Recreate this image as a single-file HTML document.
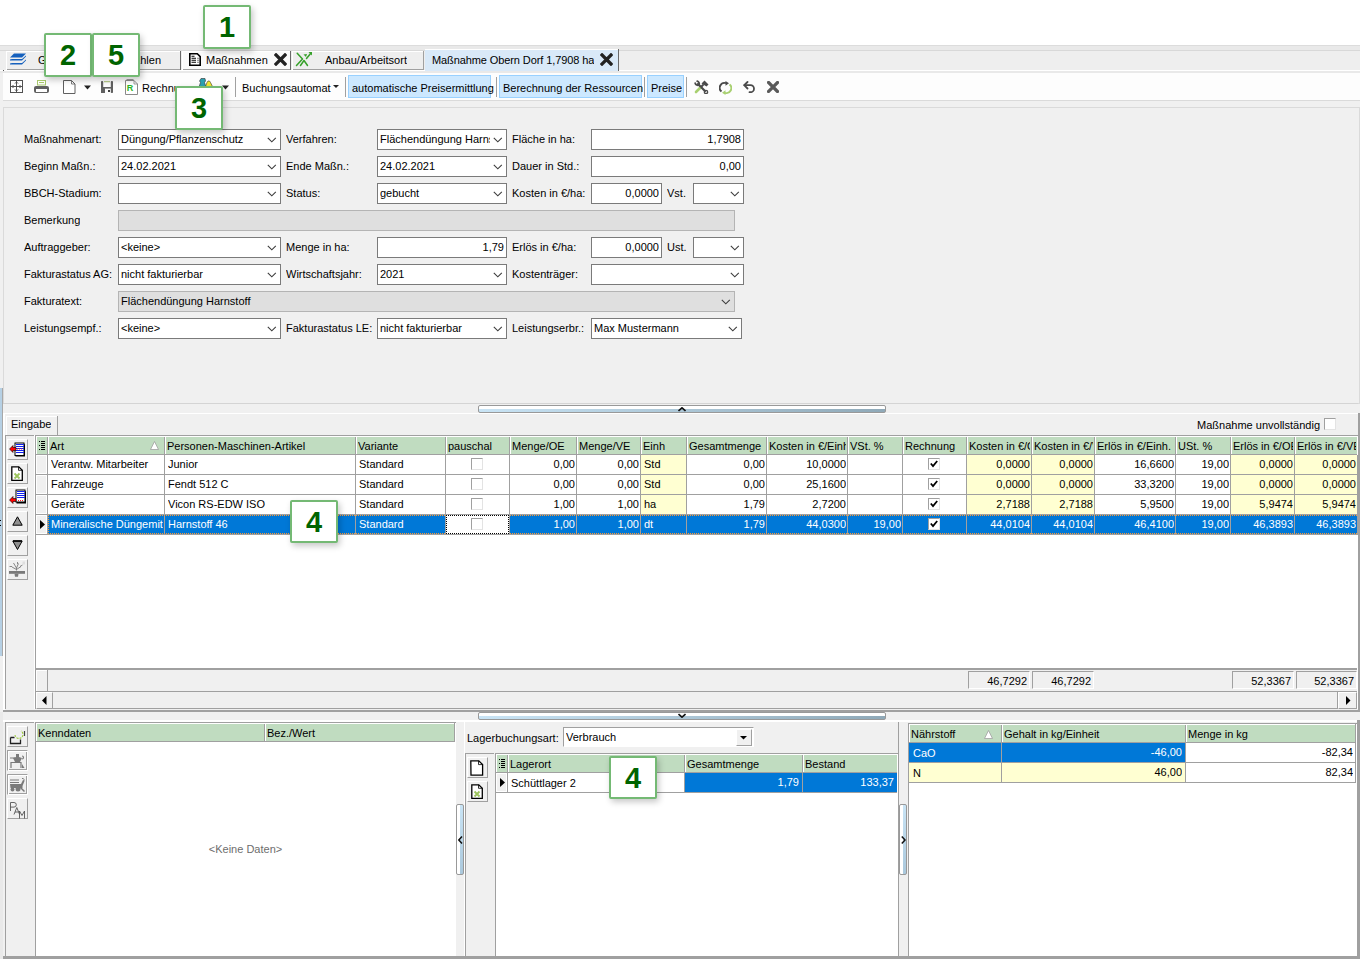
<!DOCTYPE html><html><head><meta charset="utf-8"><style>
*{margin:0;padding:0;box-sizing:border-box}
html,body{width:1360px;height:959px;overflow:hidden;background:#fff}
body{position:relative;font-family:"Liberation Sans",sans-serif;font-size:11px;color:#000}
div{position:absolute}
.t{white-space:nowrap;line-height:13px;height:13px;overflow:hidden}
</style></head><body><div style="left:0px;top:45px;width:1360px;height:914px;background:#f0f0f0"></div>
<div style="left:0px;top:45px;width:1360px;height:1px;background:#dcdcdc"></div>
<div style="left:0px;top:46px;width:1360px;height:5px;background:#e9e9e9"></div>
<div style="left:0px;top:51px;width:1360px;height:19px;background:#eeeeee"></div>
<div style="left:0px;top:50px;width:1360px;height:1px;background:#d9d9d9"></div>
<div style="left:0px;top:70px;width:1360px;height:1px;background:#ffffff"></div>
<div style="left:0px;top:71px;width:1360px;height:2px;background:#e9e9e9"></div>
<div style="left:3px;top:73px;width:1357px;height:27px;background:#fdfdfd"></div>
<div style="left:3px;top:70px;width:1px;height:1px;background:#555"></div>
<div style="left:3px;top:100px;width:1357px;height:1px;background:#dadada"></div>
<div style="left:6px;top:51px;width:175px;height:19px;background:#eeeeee;border-top:1px solid #fff;border-left:1px solid #fff"></div>
<div style="left:7px;top:69px;width:174px;height:1px;background:#a0a0a0"></div>
<div style="left:180px;top:51px;width:1px;height:19px;background:#6a6a6a"></div>
<div class="t" style="left:38px;top:54px;">G</div>
<div class="t" style="left:-139px;top:54px;width:300px;text-align:right;">ahlen</div>
<svg style="position:absolute;left:10px;top:53px;" width="16" height="14" viewBox="0 0 16 14"><path d="M4 0.5h12l-4 4h-12z" fill="#1560bd"/><path d="M0 6.5l2-0.5h10l4-3.5v1l-4 4h-12z" fill="#1560bd"/><path d="M0 10.5l2-0.5h10l4-3.5v1l-4 4h-12z" fill="#1560bd"/></svg>
<div style="left:182px;top:51px;width:109px;height:19px;background:#fafafa;border-top:1px solid #fff;border-left:1px solid #fff"></div>
<div style="left:183px;top:69px;width:108px;height:1px;background:#a0a0a0"></div>
<div style="left:290px;top:51px;width:1px;height:19px;background:#6a6a6a"></div>
<div class="t" style="left:206px;top:54px;">Maßnahmen</div>
<svg style="position:absolute;left:189px;top:53px;" width="12" height="13" viewBox="0 0 12 13"><path d="M0.8 0.8h7.5l2.9 2.9v8.5h-10.4z" fill="#fff" stroke="#000" stroke-width="1.6"/><path d="M2.5 3.3h3M2.5 5.3h4.5M2.5 7.3h4.5M2.5 9.3h4.5" stroke="#000" stroke-width="1.1"/><path d="M8.5 5.3h1M8.5 7.3h1M8.5 9.3h1" stroke="#000" stroke-width="1.1"/></svg>
<svg style="position:absolute;left:274px;top:53px;" width="13" height="13" viewBox="0 0 13 13"><path d="M2 2l9 9M11 2l-9 9" stroke="#222" stroke-width="3.3" stroke-linecap="square"/></svg>
<div style="left:292px;top:51px;width:132px;height:19px;background:#eeeeee;border-top:1px solid #fff;border-left:1px solid #fff"></div>
<div style="left:293px;top:69px;width:131px;height:1px;background:#a0a0a0"></div>
<div style="left:423px;top:51px;width:1px;height:19px;background:#a0a0a0"></div>
<div class="t" style="left:325px;top:54px;">Anbau/Arbeitsort</div>
<svg style="position:absolute;left:290px;top:48px;" width="24" height="22" viewBox="0 0 24 22"><g fill="none" stroke="#36a02a" stroke-width="1.5" stroke-linecap="round" stroke-linejoin="round"><path d="M7.2 5.2L12.5 11L6.5 17.5"/><path d="M10.5 17.5L14 12.5L17.5 17.5"/><path d="M16.5 10.5L20.8 5.2"/></g><path d="M18.5 4H22V7.5z" fill="#36a02a"/><path d="M13.5 6.5L17 6L16 9z" fill="#36a02a"/></svg>
<div style="left:425px;top:49px;width:194px;height:22px;background:#d9e9f8;border-top:1px solid #fff"></div>
<div style="left:618px;top:49px;width:1px;height:22px;background:#6a6a6a"></div>
<div class="t" style="left:432px;top:54px;letter-spacing:-0.1px">Maßnahme Obern Dorf 1,7908 ha</div>
<svg style="position:absolute;left:600px;top:53px;" width="13" height="13" viewBox="0 0 13 13"><path d="M2 2l9 9M11 2l-9 9" stroke="#222" stroke-width="3.3" stroke-linecap="square"/></svg>
<div style="left:619px;top:50px;width:741px;height:1px;background:#d8d8d8"></div>
<div style="left:3px;top:107px;width:1357px;height:297px;background:#f0f0f0;border:1px solid #dadada"></div>
<div class="t" style="left:24px;top:133px;">Maßnahmenart:</div>
<div class="t" style="left:24px;top:160px;">Beginn Maßn.:</div>
<div class="t" style="left:24px;top:187px;">BBCH-Stadium:</div>
<div class="t" style="left:24px;top:214px;">Bemerkung</div>
<div class="t" style="left:24px;top:241px;">Auftraggeber:</div>
<div class="t" style="left:24px;top:268px;">Fakturastatus AG:</div>
<div class="t" style="left:24px;top:295px;">Fakturatext:</div>
<div class="t" style="left:24px;top:322px;">Leistungsempf.:</div>
<div class="t" style="left:286px;top:133px;">Verfahren:</div>
<div class="t" style="left:286px;top:160px;">Ende Maßn.:</div>
<div class="t" style="left:286px;top:187px;">Status:</div>
<div class="t" style="left:286px;top:241px;">Menge in ha:</div>
<div class="t" style="left:286px;top:268px;">Wirtschaftsjahr:</div>
<div class="t" style="left:286px;top:322px;">Fakturastatus LE:</div>
<div class="t" style="left:512px;top:133px;">Fläche in ha:</div>
<div class="t" style="left:512px;top:160px;">Dauer in Std.:</div>
<div class="t" style="left:512px;top:187px;">Kosten in €/ha:</div>
<div class="t" style="left:512px;top:241px;">Erlös in €/ha:</div>
<div class="t" style="left:512px;top:268px;">Kostenträger:</div>
<div class="t" style="left:512px;top:322px;">Leistungserbr.:</div>
<div style="left:118px;top:129px;width:163px;height:21px;background:#fff;border:1px solid #7a7a7a"></div>
<div class="t" style="left:121px;top:133px;width:143px">Düngung/Pflanzenschutz</div>
<svg style="position:absolute;left:267px;top:137px;" width="10" height="6" viewBox="0 0 10 6"><polyline points="0.8,0.8 4.8,4.8 8.8,0.8" fill="none" stroke="#3c3c3c" stroke-width="1.1"/></svg>
<div style="left:118px;top:156px;width:163px;height:21px;background:#fff;border:1px solid #7a7a7a"></div>
<div class="t" style="left:121px;top:160px;width:143px">24.02.2021</div>
<svg style="position:absolute;left:267px;top:164px;" width="10" height="6" viewBox="0 0 10 6"><polyline points="0.8,0.8 4.8,4.8 8.8,0.8" fill="none" stroke="#3c3c3c" stroke-width="1.1"/></svg>
<div style="left:118px;top:183px;width:163px;height:21px;background:#fff;border:1px solid #7a7a7a"></div>
<svg style="position:absolute;left:267px;top:191px;" width="10" height="6" viewBox="0 0 10 6"><polyline points="0.8,0.8 4.8,4.8 8.8,0.8" fill="none" stroke="#3c3c3c" stroke-width="1.1"/></svg>
<div style="left:118px;top:210px;width:617px;height:21px;background:#dfdfdf;border:1px solid #b4b4b4"></div>
<div style="left:118px;top:237px;width:163px;height:21px;background:#fff;border:1px solid #7a7a7a"></div>
<div class="t" style="left:121px;top:241px;width:143px">&lt;keine&gt;</div>
<svg style="position:absolute;left:267px;top:245px;" width="10" height="6" viewBox="0 0 10 6"><polyline points="0.8,0.8 4.8,4.8 8.8,0.8" fill="none" stroke="#3c3c3c" stroke-width="1.1"/></svg>
<div style="left:118px;top:264px;width:163px;height:21px;background:#fff;border:1px solid #7a7a7a"></div>
<div class="t" style="left:121px;top:268px;width:143px">nicht fakturierbar</div>
<svg style="position:absolute;left:267px;top:272px;" width="10" height="6" viewBox="0 0 10 6"><polyline points="0.8,0.8 4.8,4.8 8.8,0.8" fill="none" stroke="#3c3c3c" stroke-width="1.1"/></svg>
<div style="left:118px;top:291px;width:617px;height:21px;background:#dfdfdf;border:1px solid #b4b4b4"></div>
<div class="t" style="left:121px;top:295px;width:597px">Flächendüngung Harnstoff</div>
<svg style="position:absolute;left:721px;top:299px;" width="10" height="6" viewBox="0 0 10 6"><polyline points="0.8,0.8 4.8,4.8 8.8,0.8" fill="none" stroke="#3c3c3c" stroke-width="1.1"/></svg>
<div style="left:118px;top:318px;width:163px;height:21px;background:#fff;border:1px solid #7a7a7a"></div>
<div class="t" style="left:121px;top:322px;width:143px">&lt;keine&gt;</div>
<svg style="position:absolute;left:267px;top:326px;" width="10" height="6" viewBox="0 0 10 6"><polyline points="0.8,0.8 4.8,4.8 8.8,0.8" fill="none" stroke="#3c3c3c" stroke-width="1.1"/></svg>
<div style="left:377px;top:129px;width:130px;height:21px;background:#fff;border:1px solid #7a7a7a"></div>
<div class="t" style="left:380px;top:133px;width:110px">Flächendüngung Harns</div>
<svg style="position:absolute;left:493px;top:137px;" width="10" height="6" viewBox="0 0 10 6"><polyline points="0.8,0.8 4.8,4.8 8.8,0.8" fill="none" stroke="#3c3c3c" stroke-width="1.1"/></svg>
<div style="left:377px;top:156px;width:130px;height:21px;background:#fff;border:1px solid #7a7a7a"></div>
<div class="t" style="left:380px;top:160px;width:110px">24.02.2021</div>
<svg style="position:absolute;left:493px;top:164px;" width="10" height="6" viewBox="0 0 10 6"><polyline points="0.8,0.8 4.8,4.8 8.8,0.8" fill="none" stroke="#3c3c3c" stroke-width="1.1"/></svg>
<div style="left:377px;top:183px;width:130px;height:21px;background:#fff;border:1px solid #7a7a7a"></div>
<div class="t" style="left:380px;top:187px;width:110px">gebucht</div>
<svg style="position:absolute;left:493px;top:191px;" width="10" height="6" viewBox="0 0 10 6"><polyline points="0.8,0.8 4.8,4.8 8.8,0.8" fill="none" stroke="#3c3c3c" stroke-width="1.1"/></svg>
<div style="left:377px;top:237px;width:130px;height:21px;background:#fff;border:1px solid #7a7a7a"></div>
<div class="t" style="left:204px;top:241px;width:300px;text-align:right;">1,79</div>
<div style="left:377px;top:264px;width:130px;height:21px;background:#fff;border:1px solid #7a7a7a"></div>
<div class="t" style="left:380px;top:268px;width:110px">2021</div>
<svg style="position:absolute;left:493px;top:272px;" width="10" height="6" viewBox="0 0 10 6"><polyline points="0.8,0.8 4.8,4.8 8.8,0.8" fill="none" stroke="#3c3c3c" stroke-width="1.1"/></svg>
<div style="left:377px;top:318px;width:130px;height:21px;background:#fff;border:1px solid #7a7a7a"></div>
<div class="t" style="left:380px;top:322px;width:110px">nicht fakturierbar</div>
<svg style="position:absolute;left:493px;top:326px;" width="10" height="6" viewBox="0 0 10 6"><polyline points="0.8,0.8 4.8,4.8 8.8,0.8" fill="none" stroke="#3c3c3c" stroke-width="1.1"/></svg>
<div style="left:591px;top:129px;width:153px;height:21px;background:#fff;border:1px solid #7a7a7a"></div>
<div class="t" style="left:441px;top:133px;width:300px;text-align:right;">1,7908</div>
<div style="left:591px;top:156px;width:153px;height:21px;background:#fff;border:1px solid #7a7a7a"></div>
<div class="t" style="left:441px;top:160px;width:300px;text-align:right;">0,00</div>
<div style="left:591px;top:183px;width:71px;height:21px;background:#fff;border:1px solid #7a7a7a"></div>
<div class="t" style="left:359px;top:187px;width:300px;text-align:right;">0,0000</div>
<div class="t" style="left:667px;top:187px;">Vst.</div>
<div style="left:693px;top:183px;width:51px;height:21px;background:#fff;border:1px solid #7a7a7a"></div>
<svg style="position:absolute;left:730px;top:191px;" width="10" height="6" viewBox="0 0 10 6"><polyline points="0.8,0.8 4.8,4.8 8.8,0.8" fill="none" stroke="#3c3c3c" stroke-width="1.1"/></svg>
<div style="left:591px;top:237px;width:71px;height:21px;background:#fff;border:1px solid #7a7a7a"></div>
<div class="t" style="left:359px;top:241px;width:300px;text-align:right;">0,0000</div>
<div class="t" style="left:667px;top:241px;">Ust.</div>
<div style="left:693px;top:237px;width:51px;height:21px;background:#fff;border:1px solid #7a7a7a"></div>
<svg style="position:absolute;left:730px;top:245px;" width="10" height="6" viewBox="0 0 10 6"><polyline points="0.8,0.8 4.8,4.8 8.8,0.8" fill="none" stroke="#3c3c3c" stroke-width="1.1"/></svg>
<div style="left:591px;top:264px;width:153px;height:21px;background:#fff;border:1px solid #7a7a7a"></div>
<svg style="position:absolute;left:730px;top:272px;" width="10" height="6" viewBox="0 0 10 6"><polyline points="0.8,0.8 4.8,4.8 8.8,0.8" fill="none" stroke="#3c3c3c" stroke-width="1.1"/></svg>
<div style="left:591px;top:318px;width:151px;height:21px;background:#fff;border:1px solid #7a7a7a"></div>
<div class="t" style="left:594px;top:322px;width:131px">Max Mustermann</div>
<svg style="position:absolute;left:728px;top:326px;" width="10" height="6" viewBox="0 0 10 6"><polyline points="0.8,0.8 4.8,4.8 8.8,0.8" fill="none" stroke="#3c3c3c" stroke-width="1.1"/></svg>
<svg style="position:absolute;left:10px;top:80px;" width="13" height="13" viewBox="0 0 13 13"><rect x="0.5" y="0.5" width="12" height="12" fill="none" stroke="#505050"/><path d="M6.5 1v11M1 6.5h11" stroke="#505050" stroke-width="1"/><path d="M5 3.5L6.5 2 8 3.5M5 9.5L6.5 11 8 9.5M3.5 5L2 6.5 3.5 8M9.5 5L11 6.5 9.5 8" fill="none" stroke="#505050" stroke-width="1"/></svg>
<svg style="position:absolute;left:34px;top:80px;" width="15" height="14" viewBox="0 0 15 14"><rect x="3.5" y="0.5" width="8" height="4.5" fill="none" stroke="#a8c86a"/><path d="M5 2.5h5" stroke="#a8c86a"/><rect x="0" y="6" width="15" height="7" rx="2" fill="#606060"/><rect x="2" y="9" width="11" height="3" fill="#fdfdfd"/></svg>
<svg style="position:absolute;left:63px;top:80px;" width="13" height="14" viewBox="0 0 13 14"><path d="M0.5 0.5h8l3.5 3.5v9.5h-11.5z" fill="#fff" stroke="#606060"/><path d="M8.5 0.5v3.5h3.5" fill="none" stroke="#606060" stroke-width="0.8"/></svg>
<svg style="position:absolute;left:84px;top:85px;" width="8" height="5" viewBox="0 0 8 5"><path d="M0 0.5h7l-3.5 4z" fill="#222"/></svg>
<svg style="position:absolute;left:101px;top:81px;" width="12" height="12" viewBox="0 0 12 12"><rect x="0" y="0" width="2.2" height="12" rx="0.8" fill="#606060"/><rect x="9.8" y="0" width="2.2" height="12" rx="0.8" fill="#606060"/><rect x="0" y="6" width="12" height="1.6" fill="#606060"/><rect x="0" y="7" width="4" height="5" rx="0.6" fill="#606060"/><rect x="7" y="9" width="2" height="2" fill="#404040"/><path d="M3 0.7h6" stroke="#a8c070" stroke-width="1"/></svg>
<svg style="position:absolute;left:125px;top:79px;" width="13" height="16" viewBox="0 0 13 16"><path d="M0.5 1.5h8.5l3.5 3.5v10.5h-12z" fill="#fff" stroke="#8a8a8a"/><path d="M1.5 0.5h7" stroke="#9a9a9a"/><path d="M9 1.5v3.5h3.5" fill="none" stroke="#8a8a8a" stroke-width="0.8"/><text x="1.8" y="12.3" font-family="Liberation Sans" font-weight="bold" font-size="9" fill="#28b428">R</text></svg>
<div class="t" style="left:142px;top:82px;">Rechnung</div>
<svg style="position:absolute;left:199px;top:78px;" width="14" height="10" viewBox="0 0 14 10"><path d="M2 0.5h4l0.5 2.5-1 1.5 1.5 4.5h-7l1.5-4.5-1-1.5z" fill="#2aa0b0" stroke="#333" stroke-width="0.6"/><path d="M6.5 8.5l1.5-4 1-1.5h1.5l1 1.5 2 4z" fill="#f0e830" stroke="#333" stroke-width="0.6"/></svg>
<svg style="position:absolute;left:222px;top:85px;" width="8" height="5" viewBox="0 0 8 5"><path d="M0 0.5h7l-3.5 4z" fill="#222"/></svg>
<div style="left:235px;top:77px;width:1px;height:20px;background:#a0a0a0"></div>
<div class="t" style="left:242px;top:82px;">Buchungsautomat</div>
<svg style="position:absolute;left:333px;top:85px;" width="6" height="4" viewBox="0 0 6 4"><path d="M0 0h6l-3 3z" fill="#222"/></svg>
<div style="left:345px;top:77px;width:1px;height:20px;background:#a0a0a0"></div>
<div style="left:348px;top:75px;width:143px;height:23px;background:#cce8ff;border:1px solid #99d1ff"></div>
<div class="t" style="left:352px;top:82px;">automatische Preisermittlung</div>
<div style="left:496px;top:77px;width:1px;height:20px;background:#a0a0a0"></div>
<div style="left:499px;top:75px;width:143px;height:23px;background:#cce8ff;border:1px solid #99d1ff"></div>
<div class="t" style="left:503px;top:82px;">Berechnung der Ressourcen</div>
<div style="left:644px;top:77px;width:1px;height:20px;background:#a0a0a0"></div>
<div style="left:647px;top:75px;width:37px;height:23px;background:#cce8ff;border:1px solid #99d1ff"></div>
<div class="t" style="left:651px;top:82px;">Preise</div>
<div style="left:686px;top:77px;width:1px;height:20px;background:#a0a0a0"></div>
<svg style="position:absolute;left:694px;top:80px;" width="15" height="14" viewBox="0 0 15 14"><g stroke-linecap="round" fill="none"><path d="M4 4L11 11" stroke="#4a4a4a" stroke-width="2.2"/><path d="M1.2 3.2A2.8 2.8 0 0 0 5 5M3.2 1.2A2.8 2.8 0 0 1 5 5" stroke="#4a4a4a" stroke-width="1.8"/><circle cx="12" cy="12" r="1.6" stroke="#4a4a4a" stroke-width="1.4"/><path d="M9 5L5.5 8.5" stroke="#4a4a4a" stroke-width="2"/><path d="M5.5 8.5L2 12" stroke="#a8d070" stroke-width="2.6"/></g><path d="M7.5 3.5L10.5 0.5L14.5 4.5L12.5 6.5z" fill="#4a4a4a"/></svg>
<svg style="position:absolute;left:719px;top:81px;" width="13" height="14" viewBox="0 0 13 14"><path d="M7 2.2A4.8 4.8 0 0 0 2.5 10.5" fill="none" stroke="#4a4a4a" stroke-width="1.9"/><path d="M6.5 0L10 2.3L6.5 4.8z" fill="#4a4a4a"/><path d="M6 11.8A4.8 4.8 0 0 0 10.5 3.5" fill="none" stroke="#a8d070" stroke-width="1.9"/><path d="M6.5 9.2L3 11.7L6.5 14z" fill="#a8d070"/></svg>
<svg style="position:absolute;left:743px;top:81px;" width="13" height="12" viewBox="0 0 13 12"><g fill="none" stroke="#4a4a4a" stroke-width="1.8" stroke-linecap="round" stroke-linejoin="round"><path d="M4.5 1L1.2 4.2L4.5 7.5"/><path d="M1.5 4.2H7.5A3.5 3.5 0 0 1 7.5 11.2H6.5"/></g></svg>
<svg style="position:absolute;left:767px;top:81px;" width="12" height="12" viewBox="0 0 12 12"><path d="M1.5 1.5l9 9M10.5 1.5l-9 9" stroke="#5a5a5a" stroke-width="3.2" stroke-linecap="square"/></svg>
<div style="left:3px;top:403px;width:1355px;height:1px;background:#d4d4d4"></div>
<div style="left:478px;top:405px;width:408px;height:8px;border:1px solid #999;border-radius:2px;background:linear-gradient(to bottom,#fff 0,#fff 3px,transparent 3px),linear-gradient(to right,#c9e4f5,#8fa9b8)"></div>
<svg style="position:absolute;left:678px;top:407px;" width="8" height="5" viewBox="0 0 8 5"><polyline points="0.5,4 4,0.8 7.5,4" fill="none" stroke="#111" stroke-width="1.6"/></svg>
<div style="left:4px;top:413px;width:1354px;height:1px;background:#ffffff"></div>
<div style="left:0px;top:388px;width:2px;height:268px;background:#b6d0e4"></div>
<div style="left:2px;top:388px;width:1px;height:268px;background:#a8a8a8"></div>
<div style="left:3px;top:413px;width:2px;height:297px;background:#fff"></div>
<div style="left:0px;top:520px;width:1px;height:1px;background:#000"></div>
<div style="left:0px;top:525px;width:1px;height:1px;background:#000"></div>
<div style="left:6px;top:416px;width:51px;height:19px;background:#f0f0f0;border-top:1px solid #fff;border-left:1px solid #fff"></div>
<div style="left:57px;top:416px;width:1px;height:19px;background:#a0a0a0"></div>
<div class="t" style="left:11px;top:418px;">Eingabe</div>
<div class="t" style="left:1020px;top:419px;width:300px;text-align:right;">Maßnahme unvollständig</div>
<div style="left:1324px;top:418px;width:12px;height:12px;background:#fff;border-left:1px solid #a0a0a0;border-top:1px solid #a0a0a0;border-right:1px solid #e3e3e3;border-bottom:1px solid #e3e3e3"></div>
<div style="left:1358px;top:413px;width:2px;height:299px;background:#a0a0a0"></div>
<div style="left:5px;top:435px;width:29px;height:274px;background:#f0f0f0;border-left:1px solid #a0a0a0;border-top:1px solid #a0a0a0"></div>
<div style="left:34px;top:435px;width:1px;height:274px;background:#ffffff"></div>
<div style="left:7px;top:439px;width:21px;height:21px;background:#f0f0f0;border-top:1px solid #fff;border-left:1px solid #fff;border-right:1px solid #a0a0a0;border-bottom:1px solid #a0a0a0"></div>
<div style="left:7px;top:463px;width:21px;height:21px;background:#f0f0f0;border-top:1px solid #fff;border-left:1px solid #fff;border-right:1px solid #a0a0a0;border-bottom:1px solid #a0a0a0"></div>
<div style="left:7px;top:487px;width:21px;height:21px;background:#f0f0f0;border-top:1px solid #fff;border-left:1px solid #fff;border-right:1px solid #a0a0a0;border-bottom:1px solid #a0a0a0"></div>
<div style="left:7px;top:511px;width:21px;height:21px;background:#f0f0f0;border-top:1px solid #fff;border-left:1px solid #fff;border-right:1px solid #a0a0a0;border-bottom:1px solid #a0a0a0"></div>
<div style="left:7px;top:535px;width:21px;height:21px;background:#f0f0f0;border-top:1px solid #fff;border-left:1px solid #fff;border-right:1px solid #a0a0a0;border-bottom:1px solid #a0a0a0"></div>
<div style="left:7px;top:559px;width:21px;height:21px;background:#f0f0f0;border-top:1px solid #fff;border-left:1px solid #fff;border-right:1px solid #a0a0a0;border-bottom:1px solid #a0a0a0"></div>
<div style="left:35px;top:435px;width:1323px;height:274px;background:#fff;border-left:1px solid #a0a0a0;border-top:1px solid #a0a0a0"></div>
<div style="left:36px;top:437px;width:1321px;height:17px;background:#c0dcc0"></div>
<div style="left:36px;top:436px;width:1321px;height:1px;background:#ffffff"></div>
<div style="left:36px;top:436px;width:1px;height:18px;background:#ffffff"></div>
<div style="left:36px;top:454px;width:1321px;height:1px;background:#a0a0a0"></div>
<div style="left:47px;top:437px;width:1px;height:17px;background:#a0a0a0"></div>
<div style="left:48px;top:437px;width:1px;height:17px;background:#ffffff"></div>
<div class="t" style="left:50px;top:440px;width:113px">Art</div>
<div style="left:164px;top:437px;width:1px;height:17px;background:#a0a0a0"></div>
<div style="left:165px;top:437px;width:1px;height:17px;background:#ffffff"></div>
<div class="t" style="left:167px;top:440px;width:187px">Personen-Maschinen-Artikel</div>
<div style="left:355px;top:437px;width:1px;height:17px;background:#a0a0a0"></div>
<div style="left:356px;top:437px;width:1px;height:17px;background:#ffffff"></div>
<div class="t" style="left:358px;top:440px;width:86px">Variante</div>
<div style="left:445px;top:437px;width:1px;height:17px;background:#a0a0a0"></div>
<div style="left:446px;top:437px;width:1px;height:17px;background:#ffffff"></div>
<div class="t" style="left:448px;top:440px;width:60px">pauschal</div>
<div style="left:509px;top:437px;width:1px;height:17px;background:#a0a0a0"></div>
<div style="left:510px;top:437px;width:1px;height:17px;background:#ffffff"></div>
<div class="t" style="left:512px;top:440px;width:63px">Menge/OE</div>
<div style="left:576px;top:437px;width:1px;height:17px;background:#a0a0a0"></div>
<div style="left:577px;top:437px;width:1px;height:17px;background:#ffffff"></div>
<div class="t" style="left:579px;top:440px;width:60px">Menge/VE</div>
<div style="left:640px;top:437px;width:1px;height:17px;background:#a0a0a0"></div>
<div style="left:641px;top:437px;width:1px;height:17px;background:#ffffff"></div>
<div class="t" style="left:643px;top:440px;width:42px">Einh</div>
<div style="left:686px;top:437px;width:1px;height:17px;background:#a0a0a0"></div>
<div style="left:687px;top:437px;width:1px;height:17px;background:#ffffff"></div>
<div class="t" style="left:689px;top:440px;width:76px">Gesamtmenge</div>
<div style="left:766px;top:437px;width:1px;height:17px;background:#a0a0a0"></div>
<div style="left:767px;top:437px;width:1px;height:17px;background:#ffffff"></div>
<div class="t" style="left:769px;top:440px;width:77px">Kosten in €/Einh</div>
<div style="left:847px;top:437px;width:1px;height:17px;background:#a0a0a0"></div>
<div style="left:848px;top:437px;width:1px;height:17px;background:#ffffff"></div>
<div class="t" style="left:850px;top:440px;width:51px">VSt. %</div>
<div style="left:902px;top:437px;width:1px;height:17px;background:#a0a0a0"></div>
<div style="left:903px;top:437px;width:1px;height:17px;background:#ffffff"></div>
<div class="t" style="left:905px;top:440px;width:60px">Rechnung</div>
<div style="left:966px;top:437px;width:1px;height:17px;background:#a0a0a0"></div>
<div style="left:967px;top:437px;width:1px;height:17px;background:#ffffff"></div>
<div class="t" style="left:969px;top:440px;width:61px">Kosten in €/OE</div>
<div style="left:1031px;top:437px;width:1px;height:17px;background:#a0a0a0"></div>
<div style="left:1032px;top:437px;width:1px;height:17px;background:#ffffff"></div>
<div class="t" style="left:1034px;top:440px;width:59px">Kosten in €/VE</div>
<div style="left:1094px;top:437px;width:1px;height:17px;background:#a0a0a0"></div>
<div style="left:1095px;top:437px;width:1px;height:17px;background:#ffffff"></div>
<div class="t" style="left:1097px;top:440px;width:77px">Erlös in €/Einh.</div>
<div style="left:1175px;top:437px;width:1px;height:17px;background:#a0a0a0"></div>
<div style="left:1176px;top:437px;width:1px;height:17px;background:#ffffff"></div>
<div class="t" style="left:1178px;top:440px;width:51px">USt. %</div>
<div style="left:1230px;top:437px;width:1px;height:17px;background:#a0a0a0"></div>
<div style="left:1231px;top:437px;width:1px;height:17px;background:#ffffff"></div>
<div class="t" style="left:1233px;top:440px;width:60px">Erlös in €/OE</div>
<div style="left:1294px;top:437px;width:1px;height:17px;background:#a0a0a0"></div>
<div style="left:1295px;top:437px;width:1px;height:17px;background:#ffffff"></div>
<div class="t" style="left:1297px;top:440px;width:59px">Erlös in €/VE</div>
<svg style="position:absolute;left:39px;top:441px;" width="6" height="9" viewBox="0 0 6 9"><path d="M0 0h1v1h-1zM0 4h1v1h-1zM0 8h1v1h-1zM2 0h4v1h-4zM2 2h4v1h-4zM2 4h4v1h-4zM2 6h4v1h-4zM2 8h4v1h-4z" fill="#000"/></svg>
<svg style="position:absolute;left:150px;top:441px;" width="9" height="9" viewBox="0 0 9 9"><path d="M4.5 0.5L8.5 8.5H0.5z" fill="#fff" stroke="#a0a0a0" stroke-width="0.8"/></svg>
<div style="left:36px;top:455px;width:11px;height:19px;background:#f0f0f0;border:1px solid #fff"></div>
<div style="left:47px;top:455px;width:1px;height:20px;background:#a0a0a0"></div>
<div style="left:36px;top:474px;width:1321px;height:1px;background:#a0a0a0"></div>
<div style="left:164px;top:455px;width:1px;height:20px;background:#a0a0a0"></div>
<div class="t" style="left:51px;top:458px;width:112px;color:#000">Verantw. Mitarbeiter</div>
<div style="left:355px;top:455px;width:1px;height:20px;background:#a0a0a0"></div>
<div class="t" style="left:168px;top:458px;width:186px;color:#000">Junior</div>
<div style="left:445px;top:455px;width:1px;height:20px;background:#a0a0a0"></div>
<div class="t" style="left:359px;top:458px;width:85px;color:#000">Standard</div>
<div style="left:509px;top:455px;width:1px;height:20px;background:#a0a0a0"></div>
<div style="left:471px;top:458px;width:12px;height:12px;background:#fff;border-left:1px solid #a0a0a0;border-top:1px solid #a0a0a0;border-right:1px solid #e3e3e3;border-bottom:1px solid #e3e3e3"></div>
<div style="left:576px;top:455px;width:1px;height:20px;background:#a0a0a0"></div>
<div class="t" style="left:510px;top:458px;width:65px;text-align:right;color:#000">0,00</div>
<div style="left:640px;top:455px;width:1px;height:20px;background:#a0a0a0"></div>
<div class="t" style="left:577px;top:458px;width:62px;text-align:right;color:#000">0,00</div>
<div style="left:641px;top:455px;width:45px;height:19px;background:#ffffd2"></div>
<div style="left:686px;top:455px;width:1px;height:20px;background:#a0a0a0"></div>
<div class="t" style="left:644px;top:458px;width:41px;color:#000">Std</div>
<div style="left:766px;top:455px;width:1px;height:20px;background:#a0a0a0"></div>
<div class="t" style="left:687px;top:458px;width:78px;text-align:right;color:#000">0,00</div>
<div style="left:847px;top:455px;width:1px;height:20px;background:#a0a0a0"></div>
<div class="t" style="left:767px;top:458px;width:79px;text-align:right;color:#000">10,0000</div>
<div style="left:902px;top:455px;width:1px;height:20px;background:#a0a0a0"></div>
<div class="t" style="left:848px;top:458px;width:53px;text-align:right;color:#000"></div>
<div style="left:966px;top:455px;width:1px;height:20px;background:#a0a0a0"></div>
<div style="left:928px;top:458px;width:12px;height:12px;background:#fff;border-left:1px solid #a0a0a0;border-top:1px solid #a0a0a0;border-right:1px solid #e3e3e3;border-bottom:1px solid #e3e3e3"></div>
<svg style="position:absolute;left:930px;top:460px;" width="8" height="8" viewBox="0 0 8 8"><path d="M0.8 3.5L3 6L7.2 1" fill="none" stroke="#000" stroke-width="1.8"/></svg>
<div style="left:967px;top:455px;width:64px;height:19px;background:#ffffd2"></div>
<div style="left:1031px;top:455px;width:1px;height:20px;background:#a0a0a0"></div>
<div class="t" style="left:967px;top:458px;width:63px;text-align:right;color:#000">0,0000</div>
<div style="left:1032px;top:455px;width:62px;height:19px;background:#ffffd2"></div>
<div style="left:1094px;top:455px;width:1px;height:20px;background:#a0a0a0"></div>
<div class="t" style="left:1032px;top:458px;width:61px;text-align:right;color:#000">0,0000</div>
<div style="left:1175px;top:455px;width:1px;height:20px;background:#a0a0a0"></div>
<div class="t" style="left:1095px;top:458px;width:79px;text-align:right;color:#000">16,6600</div>
<div style="left:1230px;top:455px;width:1px;height:20px;background:#a0a0a0"></div>
<div class="t" style="left:1176px;top:458px;width:53px;text-align:right;color:#000">19,00</div>
<div style="left:1231px;top:455px;width:63px;height:19px;background:#ffffd2"></div>
<div style="left:1294px;top:455px;width:1px;height:20px;background:#a0a0a0"></div>
<div class="t" style="left:1231px;top:458px;width:62px;text-align:right;color:#000">0,0000</div>
<div style="left:1295px;top:455px;width:62px;height:19px;background:#ffffd2"></div>
<div style="left:1357px;top:455px;width:1px;height:20px;background:#a0a0a0"></div>
<div class="t" style="left:1295px;top:458px;width:61px;text-align:right;color:#000">0,0000</div>
<div style="left:36px;top:475px;width:11px;height:19px;background:#f0f0f0;border:1px solid #fff"></div>
<div style="left:47px;top:475px;width:1px;height:20px;background:#a0a0a0"></div>
<div style="left:36px;top:494px;width:1321px;height:1px;background:#a0a0a0"></div>
<div style="left:164px;top:475px;width:1px;height:20px;background:#a0a0a0"></div>
<div class="t" style="left:51px;top:478px;width:112px;color:#000">Fahrzeuge</div>
<div style="left:355px;top:475px;width:1px;height:20px;background:#a0a0a0"></div>
<div class="t" style="left:168px;top:478px;width:186px;color:#000">Fendt 512 C</div>
<div style="left:445px;top:475px;width:1px;height:20px;background:#a0a0a0"></div>
<div class="t" style="left:359px;top:478px;width:85px;color:#000">Standard</div>
<div style="left:509px;top:475px;width:1px;height:20px;background:#a0a0a0"></div>
<div style="left:471px;top:478px;width:12px;height:12px;background:#fff;border-left:1px solid #a0a0a0;border-top:1px solid #a0a0a0;border-right:1px solid #e3e3e3;border-bottom:1px solid #e3e3e3"></div>
<div style="left:576px;top:475px;width:1px;height:20px;background:#a0a0a0"></div>
<div class="t" style="left:510px;top:478px;width:65px;text-align:right;color:#000">0,00</div>
<div style="left:640px;top:475px;width:1px;height:20px;background:#a0a0a0"></div>
<div class="t" style="left:577px;top:478px;width:62px;text-align:right;color:#000">0,00</div>
<div style="left:641px;top:475px;width:45px;height:19px;background:#ffffd2"></div>
<div style="left:686px;top:475px;width:1px;height:20px;background:#a0a0a0"></div>
<div class="t" style="left:644px;top:478px;width:41px;color:#000">Std</div>
<div style="left:766px;top:475px;width:1px;height:20px;background:#a0a0a0"></div>
<div class="t" style="left:687px;top:478px;width:78px;text-align:right;color:#000">0,00</div>
<div style="left:847px;top:475px;width:1px;height:20px;background:#a0a0a0"></div>
<div class="t" style="left:767px;top:478px;width:79px;text-align:right;color:#000">25,1600</div>
<div style="left:902px;top:475px;width:1px;height:20px;background:#a0a0a0"></div>
<div class="t" style="left:848px;top:478px;width:53px;text-align:right;color:#000"></div>
<div style="left:966px;top:475px;width:1px;height:20px;background:#a0a0a0"></div>
<div style="left:928px;top:478px;width:12px;height:12px;background:#fff;border-left:1px solid #a0a0a0;border-top:1px solid #a0a0a0;border-right:1px solid #e3e3e3;border-bottom:1px solid #e3e3e3"></div>
<svg style="position:absolute;left:930px;top:480px;" width="8" height="8" viewBox="0 0 8 8"><path d="M0.8 3.5L3 6L7.2 1" fill="none" stroke="#000" stroke-width="1.8"/></svg>
<div style="left:967px;top:475px;width:64px;height:19px;background:#ffffd2"></div>
<div style="left:1031px;top:475px;width:1px;height:20px;background:#a0a0a0"></div>
<div class="t" style="left:967px;top:478px;width:63px;text-align:right;color:#000">0,0000</div>
<div style="left:1032px;top:475px;width:62px;height:19px;background:#ffffd2"></div>
<div style="left:1094px;top:475px;width:1px;height:20px;background:#a0a0a0"></div>
<div class="t" style="left:1032px;top:478px;width:61px;text-align:right;color:#000">0,0000</div>
<div style="left:1175px;top:475px;width:1px;height:20px;background:#a0a0a0"></div>
<div class="t" style="left:1095px;top:478px;width:79px;text-align:right;color:#000">33,3200</div>
<div style="left:1230px;top:475px;width:1px;height:20px;background:#a0a0a0"></div>
<div class="t" style="left:1176px;top:478px;width:53px;text-align:right;color:#000">19,00</div>
<div style="left:1231px;top:475px;width:63px;height:19px;background:#ffffd2"></div>
<div style="left:1294px;top:475px;width:1px;height:20px;background:#a0a0a0"></div>
<div class="t" style="left:1231px;top:478px;width:62px;text-align:right;color:#000">0,0000</div>
<div style="left:1295px;top:475px;width:62px;height:19px;background:#ffffd2"></div>
<div style="left:1357px;top:475px;width:1px;height:20px;background:#a0a0a0"></div>
<div class="t" style="left:1295px;top:478px;width:61px;text-align:right;color:#000">0,0000</div>
<div style="left:36px;top:495px;width:11px;height:19px;background:#f0f0f0;border:1px solid #fff"></div>
<div style="left:47px;top:495px;width:1px;height:20px;background:#a0a0a0"></div>
<div style="left:36px;top:514px;width:1321px;height:1px;background:#a0a0a0"></div>
<div style="left:164px;top:495px;width:1px;height:20px;background:#a0a0a0"></div>
<div class="t" style="left:51px;top:498px;width:112px;color:#000">Geräte</div>
<div style="left:355px;top:495px;width:1px;height:20px;background:#a0a0a0"></div>
<div class="t" style="left:168px;top:498px;width:186px;color:#000">Vicon RS-EDW ISO</div>
<div style="left:445px;top:495px;width:1px;height:20px;background:#a0a0a0"></div>
<div class="t" style="left:359px;top:498px;width:85px;color:#000">Standard</div>
<div style="left:509px;top:495px;width:1px;height:20px;background:#a0a0a0"></div>
<div style="left:471px;top:498px;width:12px;height:12px;background:#fff;border-left:1px solid #a0a0a0;border-top:1px solid #a0a0a0;border-right:1px solid #e3e3e3;border-bottom:1px solid #e3e3e3"></div>
<div style="left:576px;top:495px;width:1px;height:20px;background:#a0a0a0"></div>
<div class="t" style="left:510px;top:498px;width:65px;text-align:right;color:#000">1,00</div>
<div style="left:640px;top:495px;width:1px;height:20px;background:#a0a0a0"></div>
<div class="t" style="left:577px;top:498px;width:62px;text-align:right;color:#000">1,00</div>
<div style="left:641px;top:495px;width:45px;height:19px;background:#ffffd2"></div>
<div style="left:686px;top:495px;width:1px;height:20px;background:#a0a0a0"></div>
<div class="t" style="left:644px;top:498px;width:41px;color:#000">ha</div>
<div style="left:766px;top:495px;width:1px;height:20px;background:#a0a0a0"></div>
<div class="t" style="left:687px;top:498px;width:78px;text-align:right;color:#000">1,79</div>
<div style="left:847px;top:495px;width:1px;height:20px;background:#a0a0a0"></div>
<div class="t" style="left:767px;top:498px;width:79px;text-align:right;color:#000">2,7200</div>
<div style="left:902px;top:495px;width:1px;height:20px;background:#a0a0a0"></div>
<div class="t" style="left:848px;top:498px;width:53px;text-align:right;color:#000"></div>
<div style="left:966px;top:495px;width:1px;height:20px;background:#a0a0a0"></div>
<div style="left:928px;top:498px;width:12px;height:12px;background:#fff;border-left:1px solid #a0a0a0;border-top:1px solid #a0a0a0;border-right:1px solid #e3e3e3;border-bottom:1px solid #e3e3e3"></div>
<svg style="position:absolute;left:930px;top:500px;" width="8" height="8" viewBox="0 0 8 8"><path d="M0.8 3.5L3 6L7.2 1" fill="none" stroke="#000" stroke-width="1.8"/></svg>
<div style="left:967px;top:495px;width:64px;height:19px;background:#ffffd2"></div>
<div style="left:1031px;top:495px;width:1px;height:20px;background:#a0a0a0"></div>
<div class="t" style="left:967px;top:498px;width:63px;text-align:right;color:#000">2,7188</div>
<div style="left:1032px;top:495px;width:62px;height:19px;background:#ffffd2"></div>
<div style="left:1094px;top:495px;width:1px;height:20px;background:#a0a0a0"></div>
<div class="t" style="left:1032px;top:498px;width:61px;text-align:right;color:#000">2,7188</div>
<div style="left:1175px;top:495px;width:1px;height:20px;background:#a0a0a0"></div>
<div class="t" style="left:1095px;top:498px;width:79px;text-align:right;color:#000">5,9500</div>
<div style="left:1230px;top:495px;width:1px;height:20px;background:#a0a0a0"></div>
<div class="t" style="left:1176px;top:498px;width:53px;text-align:right;color:#000">19,00</div>
<div style="left:1231px;top:495px;width:63px;height:19px;background:#ffffd2"></div>
<div style="left:1294px;top:495px;width:1px;height:20px;background:#a0a0a0"></div>
<div class="t" style="left:1231px;top:498px;width:62px;text-align:right;color:#000">5,9474</div>
<div style="left:1295px;top:495px;width:62px;height:19px;background:#ffffd2"></div>
<div style="left:1357px;top:495px;width:1px;height:20px;background:#a0a0a0"></div>
<div class="t" style="left:1295px;top:498px;width:61px;text-align:right;color:#000">5,9474</div>
<div style="left:36px;top:515px;width:11px;height:19px;background:#f0f0f0;border:1px solid #fff"></div>
<div style="left:47px;top:515px;width:1px;height:20px;background:#a0a0a0"></div>
<div style="left:36px;top:534px;width:1321px;height:1px;background:#a0a0a0"></div>
<div style="left:48px;top:515px;width:116px;height:19px;background:#0078d7"></div>
<div style="left:164px;top:515px;width:1px;height:20px;background:#a0a0a0"></div>
<div class="t" style="left:51px;top:518px;width:112px;color:#fff">Mineralische Düngemitt</div>
<div style="left:165px;top:515px;width:190px;height:19px;background:#0078d7"></div>
<div style="left:355px;top:515px;width:1px;height:20px;background:#a0a0a0"></div>
<div class="t" style="left:168px;top:518px;width:186px;color:#fff">Harnstoff 46</div>
<div style="left:356px;top:515px;width:89px;height:19px;background:#0078d7"></div>
<div style="left:445px;top:515px;width:1px;height:20px;background:#a0a0a0"></div>
<div class="t" style="left:359px;top:518px;width:85px;color:#fff">Standard</div>
<div style="left:446px;top:515px;width:63px;height:19px;background:#fff"></div>
<div style="left:509px;top:515px;width:1px;height:20px;background:#a0a0a0"></div>
<div style="left:471px;top:518px;width:12px;height:12px;background:#fff;border-left:1px solid #a0a0a0;border-top:1px solid #a0a0a0;border-right:1px solid #e3e3e3;border-bottom:1px solid #e3e3e3"></div>
<div style="left:510px;top:515px;width:66px;height:19px;background:#0078d7"></div>
<div style="left:576px;top:515px;width:1px;height:20px;background:#a0a0a0"></div>
<div class="t" style="left:510px;top:518px;width:65px;text-align:right;color:#fff">1,00</div>
<div style="left:577px;top:515px;width:63px;height:19px;background:#0078d7"></div>
<div style="left:640px;top:515px;width:1px;height:20px;background:#a0a0a0"></div>
<div class="t" style="left:577px;top:518px;width:62px;text-align:right;color:#fff">1,00</div>
<div style="left:641px;top:515px;width:45px;height:19px;background:#0078d7"></div>
<div style="left:686px;top:515px;width:1px;height:20px;background:#a0a0a0"></div>
<div class="t" style="left:644px;top:518px;width:41px;color:#fff">dt</div>
<div style="left:687px;top:515px;width:79px;height:19px;background:#0078d7"></div>
<div style="left:766px;top:515px;width:1px;height:20px;background:#a0a0a0"></div>
<div class="t" style="left:687px;top:518px;width:78px;text-align:right;color:#fff">1,79</div>
<div style="left:767px;top:515px;width:80px;height:19px;background:#0078d7"></div>
<div style="left:847px;top:515px;width:1px;height:20px;background:#a0a0a0"></div>
<div class="t" style="left:767px;top:518px;width:79px;text-align:right;color:#fff">44,0300</div>
<div style="left:848px;top:515px;width:54px;height:19px;background:#0078d7"></div>
<div style="left:902px;top:515px;width:1px;height:20px;background:#a0a0a0"></div>
<div class="t" style="left:848px;top:518px;width:53px;text-align:right;color:#fff">19,00</div>
<div style="left:903px;top:515px;width:63px;height:19px;background:#0078d7"></div>
<div style="left:966px;top:515px;width:1px;height:20px;background:#a0a0a0"></div>
<div style="left:928px;top:518px;width:12px;height:12px;background:#fff;border-left:1px solid #a0a0a0;border-top:1px solid #a0a0a0;border-right:1px solid #e3e3e3;border-bottom:1px solid #e3e3e3"></div>
<svg style="position:absolute;left:930px;top:520px;" width="8" height="8" viewBox="0 0 8 8"><path d="M0.8 3.5L3 6L7.2 1" fill="none" stroke="#000" stroke-width="1.8"/></svg>
<div style="left:967px;top:515px;width:64px;height:19px;background:#0078d7"></div>
<div style="left:1031px;top:515px;width:1px;height:20px;background:#a0a0a0"></div>
<div class="t" style="left:967px;top:518px;width:63px;text-align:right;color:#fff">44,0104</div>
<div style="left:1032px;top:515px;width:62px;height:19px;background:#0078d7"></div>
<div style="left:1094px;top:515px;width:1px;height:20px;background:#a0a0a0"></div>
<div class="t" style="left:1032px;top:518px;width:61px;text-align:right;color:#fff">44,0104</div>
<div style="left:1095px;top:515px;width:80px;height:19px;background:#0078d7"></div>
<div style="left:1175px;top:515px;width:1px;height:20px;background:#a0a0a0"></div>
<div class="t" style="left:1095px;top:518px;width:79px;text-align:right;color:#fff">46,4100</div>
<div style="left:1176px;top:515px;width:54px;height:19px;background:#0078d7"></div>
<div style="left:1230px;top:515px;width:1px;height:20px;background:#a0a0a0"></div>
<div class="t" style="left:1176px;top:518px;width:53px;text-align:right;color:#fff">19,00</div>
<div style="left:1231px;top:515px;width:63px;height:19px;background:#0078d7"></div>
<div style="left:1294px;top:515px;width:1px;height:20px;background:#a0a0a0"></div>
<div class="t" style="left:1231px;top:518px;width:62px;text-align:right;color:#fff">46,3893</div>
<div style="left:1295px;top:515px;width:62px;height:19px;background:#0078d7"></div>
<div style="left:1357px;top:515px;width:1px;height:20px;background:#a0a0a0"></div>
<div class="t" style="left:1295px;top:518px;width:61px;text-align:right;color:#fff">46,3893</div>
<div style="left:48px;top:515px;width:1309px;height:19px;border-top:1px dotted #ff9933;border-bottom:1px dotted #ff9933"></div>
<div style="left:48px;top:515px;width:1px;height:19px;border-left:1px dotted #ff9933"></div>
<div style="left:446px;top:515px;width:63px;height:19px;border:1px dotted #000"></div>
<svg style="position:absolute;left:40px;top:520px;" width="6" height="10" viewBox="0 0 6 10"><path d="M0 0L5 4.5L0 9z" fill="#000"/></svg>
<div style="left:36px;top:668px;width:1321px;height:2px;background:#a0a0a0"></div>
<div style="left:36px;top:670px;width:1321px;height:22px;background:#f0f0f0"></div>
<div style="left:36px;top:670px;width:11px;height:21px;border-left:1px solid #fff;border-top:1px solid #fff"></div>
<div style="left:47px;top:670px;width:1px;height:21px;background:#a0a0a0"></div>
<div style="left:36px;top:691px;width:1321px;height:1px;background:#a0a0a0"></div>
<div style="left:968px;top:671px;width:62px;height:18px;border-left:1px solid #a0a0a0;border-top:1px solid #a0a0a0;border-right:1px solid #fff;border-bottom:1px solid #fff"></div>
<div class="t" style="left:968px;top:675px;width:59px;text-align:right">46,7292</div>
<div style="left:1032px;top:671px;width:62px;height:18px;border-left:1px solid #a0a0a0;border-top:1px solid #a0a0a0;border-right:1px solid #fff;border-bottom:1px solid #fff"></div>
<div class="t" style="left:1032px;top:675px;width:59px;text-align:right">46,7292</div>
<div style="left:1232px;top:671px;width:62px;height:18px;border-left:1px solid #a0a0a0;border-top:1px solid #a0a0a0;border-right:1px solid #fff;border-bottom:1px solid #fff"></div>
<div class="t" style="left:1232px;top:675px;width:59px;text-align:right">52,3367</div>
<div style="left:1296px;top:671px;width:61px;height:18px;border-left:1px solid #a0a0a0;border-top:1px solid #a0a0a0;border-right:1px solid #fff;border-bottom:1px solid #fff"></div>
<div class="t" style="left:1296px;top:675px;width:58px;text-align:right">52,3367</div>
<div style="left:36px;top:692px;width:1321px;height:17px;background:#f0f0f0"></div>
<div style="left:36px;top:692px;width:17px;height:17px;border-left:1px solid #fff;border-top:1px solid #fff;border-right:1px solid #a0a0a0;border-bottom:1px solid #a0a0a0"></div>
<svg style="position:absolute;left:42px;top:696px;" width="5" height="9" viewBox="0 0 5 9"><path d="M4.5 0L0 4.5L4.5 9z" fill="#000"/></svg>
<div style="left:1338px;top:692px;width:19px;height:17px;border-left:1px solid #fff;border-top:1px solid #fff;border-right:1px solid #a0a0a0;border-bottom:1px solid #a0a0a0"></div>
<svg style="position:absolute;left:1346px;top:696px;" width="5" height="9" viewBox="0 0 5 9"><path d="M0 0L4.5 4.5L0 9z" fill="#000"/></svg>
<div style="left:53px;top:692px;width:1285px;height:17px;border-right:1px solid #a0a0a0;border-bottom:1px solid #a0a0a0"></div>
<div style="left:3px;top:710px;width:1356px;height:2px;background:#a0a0a0"></div>
<div style="left:478px;top:712px;width:408px;height:8px;border:1px solid #999;border-radius:2px;background:linear-gradient(to bottom,#fff 0,#fff 3px,transparent 3px),linear-gradient(to right,#c9e4f5,#8fa9b8)"></div>
<svg style="position:absolute;left:678px;top:713px;" width="8" height="5" viewBox="0 0 8 5"><polyline points="0.5,1 4,4.2 7.5,1" fill="none" stroke="#111" stroke-width="1.6"/></svg>
<div style="left:3px;top:720px;width:1356px;height:2px;background:#ffffff"></div>
<div style="left:0px;top:712px;width:3px;height:247px;background:#e9e9e9"></div>
<div style="left:5px;top:722px;width:29px;height:235px;background:#f0f0f0;border-left:1px solid #a0a0a0;border-top:1px solid #a0a0a0"></div>
<div style="left:7px;top:726px;width:21px;height:21px;background:#f0f0f0;border-top:1px solid #fff;border-left:1px solid #fff;border-right:1px solid #a0a0a0;border-bottom:1px solid #a0a0a0"></div>
<div style="left:7px;top:750px;width:21px;height:21px;background:#f0f0f0;border-top:1px solid #fff;border-left:1px solid #fff;border-right:1px solid #a0a0a0;border-bottom:1px solid #a0a0a0"></div>
<div style="left:7px;top:774px;width:21px;height:21px;background:#f0f0f0;border-top:1px solid #fff;border-left:1px solid #fff;border-right:1px solid #a0a0a0;border-bottom:1px solid #a0a0a0"></div>
<div style="left:7px;top:798px;width:21px;height:21px;background:#f0f0f0;border-top:1px solid #fff;border-left:1px solid #fff;border-right:1px solid #a0a0a0;border-bottom:1px solid #a0a0a0"></div>
<div style="left:35px;top:722px;width:421px;height:235px;background:#fff;border-left:1px solid #a0a0a0;border-top:1px solid #a0a0a0"></div>
<div style="left:36px;top:723px;width:419px;height:1px;background:#fff"></div>
<div style="left:36px;top:724px;width:419px;height:17px;background:#c0dcc0"></div>
<div style="left:36px;top:724px;width:1px;height:17px;background:#ffffff"></div>
<div style="left:36px;top:741px;width:419px;height:1px;background:#a0a0a0"></div>
<div class="t" style="left:38px;top:727px;width:224px">Kenndaten</div>
<div style="left:264px;top:724px;width:1px;height:17px;background:#a0a0a0"></div>
<div style="left:265px;top:724px;width:1px;height:17px;background:#ffffff"></div>
<div class="t" style="left:267px;top:727px;width:187px">Bez./Wert</div>
<div style="left:454px;top:722px;width:1px;height:20px;background:#a0a0a0"></div>
<div class="t" style="left:36px;top:843px;width:419px;text-align:center;color:#6d6d6d">&lt;Keine Daten&gt;</div>
<div style="left:456px;top:804px;width:8px;height:71px;border:1px solid #999;border-radius:2px;background:linear-gradient(to right,#fff 0,#fff 3px,transparent 3px),linear-gradient(to bottom,#c9e4f5,#aac8dc)"></div>
<svg style="position:absolute;left:458px;top:836px;" width="5" height="8" viewBox="0 0 5 8"><polyline points="4,0.5 0.8,4 4,7.5" fill="none" stroke="#111" stroke-width="1.5"/></svg>
<div style="left:464px;top:721px;width:1px;height:236px;background:#ffffff"></div>
<div class="t" style="left:467px;top:732px;">Lagerbuchungsart:</div>
<div style="left:563px;top:727px;width:191px;height:20px;background:#fff;border-top:1px solid #a0a0a0;border-left:1px solid #a0a0a0;border-right:1px solid #fff;border-bottom:1px solid #fff"></div>
<div class="t" style="left:566px;top:731px;">Verbrauch</div>
<div style="left:736px;top:729px;width:16px;height:17px;background:#f0f0f0;border-top:1px solid #fff;border-left:1px solid #fff;border-right:1px solid #a0a0a0;border-bottom:1px solid #a0a0a0"></div>
<svg style="position:absolute;left:740px;top:736px;" width="8" height="4" viewBox="0 0 8 4"><path d="M0 0h7l-3.5 3.5z" fill="#000"/></svg>
<div style="left:465px;top:753px;width:29px;height:204px;background:#f0f0f0;border-left:1px solid #a0a0a0;border-top:1px solid #a0a0a0"></div>
<div style="left:467px;top:757px;width:21px;height:21px;background:#f0f0f0;border-top:1px solid #fff;border-left:1px solid #fff;border-right:1px solid #a0a0a0;border-bottom:1px solid #a0a0a0"></div>
<div style="left:467px;top:781px;width:21px;height:21px;background:#f0f0f0;border-top:1px solid #fff;border-left:1px solid #fff;border-right:1px solid #a0a0a0;border-bottom:1px solid #a0a0a0"></div>
<div style="left:495px;top:753px;width:403px;height:204px;background:#fff;border-left:1px solid #a0a0a0;border-top:1px solid #a0a0a0"></div>
<div style="left:898px;top:722px;width:1px;height:235px;background:#a0a0a0"></div>
<div style="left:496px;top:754px;width:401px;height:1px;background:#fff"></div>
<div style="left:496px;top:755px;width:401px;height:17px;background:#c0dcc0"></div>
<div style="left:496px;top:755px;width:1px;height:17px;background:#ffffff"></div>
<div style="left:496px;top:772px;width:401px;height:1px;background:#a0a0a0"></div>
<div style="left:507px;top:755px;width:1px;height:17px;background:#a0a0a0"></div>
<div style="left:508px;top:755px;width:1px;height:17px;background:#ffffff"></div>
<div class="t" style="left:510px;top:758px;width:173px">Lagerort</div>
<div style="left:684px;top:755px;width:1px;height:17px;background:#a0a0a0"></div>
<div style="left:685px;top:755px;width:1px;height:17px;background:#ffffff"></div>
<div class="t" style="left:687px;top:758px;width:114px">Gesamtmenge</div>
<div style="left:802px;top:755px;width:1px;height:17px;background:#a0a0a0"></div>
<div style="left:803px;top:755px;width:1px;height:17px;background:#ffffff"></div>
<div class="t" style="left:805px;top:758px;width:91px">Bestand</div>
<svg style="position:absolute;left:499px;top:759px;" width="6" height="9" viewBox="0 0 6 9"><path d="M0 0h1v1h-1zM0 4h1v1h-1zM0 8h1v1h-1zM2 0h4v1h-4zM2 2h4v1h-4zM2 4h4v1h-4zM2 6h4v1h-4zM2 8h4v1h-4z" fill="#000"/></svg>
<div style="left:496px;top:773px;width:11px;height:19px;background:#f0f0f0;border:1px solid #fff"></div>
<div style="left:507px;top:773px;width:1px;height:19px;background:#a0a0a0"></div>
<svg style="position:absolute;left:500px;top:778px;" width="6" height="10" viewBox="0 0 6 10"><path d="M0 0L5 4.5L0 9z" fill="#000"/></svg>
<div class="t" style="left:511px;top:777px;">Schüttlager 2</div>
<div style="left:684px;top:773px;width:1px;height:19px;background:#a0a0a0"></div>
<div style="left:685px;top:773px;width:117px;height:19px;background:#0078d7"></div>
<div style="left:802px;top:773px;width:1px;height:19px;background:#a0a0a0"></div>
<div style="left:803px;top:773px;width:94px;height:19px;background:#0078d7"></div>
<div class="t" style="left:685px;top:776px;width:114px;text-align:right;color:#fff">1,79</div>
<div class="t" style="left:803px;top:776px;width:91px;text-align:right;color:#fff">133,37</div>
<div style="left:496px;top:792px;width:401px;height:1px;background:#a0a0a0"></div>
<div style="left:899px;top:804px;width:8px;height:71px;border:1px solid #999;border-radius:2px;background:linear-gradient(to right,#fff 0,#fff 3px,transparent 3px),linear-gradient(to bottom,#c9e4f5,#aac8dc)"></div>
<svg style="position:absolute;left:901px;top:836px;" width="5" height="8" viewBox="0 0 5 8"><polyline points="0.8,0.5 4,4 0.8,7.5" fill="none" stroke="#111" stroke-width="1.5"/></svg>
<div style="left:908px;top:723px;width:450px;height:234px;background:#fff;border-left:1px solid #a0a0a0;border-top:1px solid #a0a0a0"></div>
<div style="left:909px;top:724px;width:448px;height:1px;background:#fff"></div>
<div style="left:909px;top:725px;width:446px;height:17px;background:#c0dcc0"></div>
<div style="left:909px;top:725px;width:1px;height:17px;background:#ffffff"></div>
<div style="left:909px;top:742px;width:446px;height:1px;background:#a0a0a0"></div>
<div class="t" style="left:911px;top:728px;width:88px">Nährstoff</div>
<div style="left:1001px;top:725px;width:1px;height:17px;background:#a0a0a0"></div>
<div style="left:1002px;top:725px;width:1px;height:17px;background:#ffffff"></div>
<div class="t" style="left:1004px;top:728px;width:180px">Gehalt in kg/Einheit</div>
<div style="left:1185px;top:725px;width:1px;height:17px;background:#a0a0a0"></div>
<div style="left:1186px;top:725px;width:1px;height:17px;background:#ffffff"></div>
<div class="t" style="left:1188px;top:728px;width:166px">Menge in kg</div>
<svg style="position:absolute;left:984px;top:730px;" width="9" height="9" viewBox="0 0 9 9"><path d="M4.5 0.5L8.5 8.5H0.5z" fill="#fff" stroke="#a0a0a0" stroke-width="0.8"/></svg>
<div style="left:909px;top:743px;width:92px;height:19px;background:#0078d7"></div>
<div style="left:1002px;top:743px;width:183px;height:19px;background:#0078d7"></div>
<div class="t" style="left:913px;top:747px;color:#fff">CaO</div>
<div class="t" style="left:1002px;top:746px;width:180px;text-align:right;color:#fff">-46,00</div>
<div class="t" style="left:1186px;top:746px;width:167px;text-align:right">-82,34</div>
<div style="left:909px;top:763px;width:92px;height:19px;background:#ffffd2"></div>
<div style="left:1002px;top:763px;width:183px;height:19px;background:#ffffd2"></div>
<div class="t" style="left:913px;top:767px;">N</div>
<div class="t" style="left:1002px;top:766px;width:180px;text-align:right">46,00</div>
<div class="t" style="left:1186px;top:766px;width:167px;text-align:right">82,34</div>
<div style="left:909px;top:762px;width:446px;height:1px;background:#a0a0a0"></div>
<div style="left:909px;top:782px;width:446px;height:1px;background:#a0a0a0"></div>
<div style="left:1001px;top:743px;width:1px;height:40px;background:#a0a0a0"></div>
<div style="left:1185px;top:743px;width:1px;height:40px;background:#a0a0a0"></div>
<div style="left:1355px;top:724px;width:1px;height:59px;background:#a0a0a0"></div>
<div style="left:1357px;top:720px;width:3px;height:239px;background:#a0a0a0"></div>
<div style="left:3px;top:956px;width:1357px;height:3px;background:#a0a0a0"></div>
<div style="left:203px;top:5px;width:48px;height:44px;background:#fff;border:2px solid #74b974;border-radius:2px;box-shadow:2px 3px 6px rgba(0,0,0,0.22);font-weight:bold;font-size:29px;line-height:41px;text-align:center;color:#006400">1</div>
<div style="left:44px;top:33px;width:48px;height:44px;background:#fff;border:2px solid #74b974;border-radius:2px;box-shadow:2px 3px 6px rgba(0,0,0,0.22);font-weight:bold;font-size:29px;line-height:41px;text-align:center;color:#006400">2</div>
<div style="left:92px;top:33px;width:48px;height:44px;background:#fff;border:2px solid #74b974;border-radius:2px;box-shadow:2px 3px 6px rgba(0,0,0,0.22);font-weight:bold;font-size:29px;line-height:41px;text-align:center;color:#006400">5</div>
<div style="left:175px;top:86px;width:48px;height:44px;background:#fff;border:2px solid #74b974;border-radius:2px;box-shadow:2px 3px 6px rgba(0,0,0,0.22);font-weight:bold;font-size:29px;line-height:41px;text-align:center;color:#006400">3</div>
<div style="left:290px;top:500px;width:48px;height:43px;background:#fff;border:2px solid #74b974;border-radius:2px;box-shadow:2px 3px 6px rgba(0,0,0,0.22);font-weight:bold;font-size:29px;line-height:40px;text-align:center;color:#006400">4</div>
<div style="left:609px;top:756px;width:48px;height:43px;background:#fff;border:2px solid #74b974;border-radius:2px;box-shadow:2px 3px 6px rgba(0,0,0,0.22);font-weight:bold;font-size:29px;line-height:40px;text-align:center;color:#006400">4</div>
<svg style="position:absolute;left:9px;top:442px;" width="18" height="16" viewBox="0 0 18 16"><path d="M6.5 1.5h8.5l1 1v12h-9.5z" fill="#000"/><rect x="6" y="1" width="9" height="12.5" fill="#fff" stroke="#000" stroke-width="1"/><path d="M7 2.5h8M7 4.5h8M7 6.5h8M7 8.5h8M7 10.5h8" stroke="#1020f0" stroke-width="1"/><path d="M0.5 7L4 3.5V5.5H7V8.5H4V10.5z" fill="#ff0000" stroke="#000" stroke-width="0.6"/><path d="M8 7h1M10 7h1M12 7h1" stroke="#ff2020" stroke-width="1.2"/></svg>
<svg style="position:absolute;left:11px;top:466px;" width="13" height="16" viewBox="0 0 13 16"><path d="M0.8 0.8h7l3.5 3.5v10h-10.5z" fill="#fff" stroke="#000" stroke-width="1.3"/><path d="M7.5 0.8v3.5h3.8" fill="none" stroke="#000" stroke-width="0.8"/><path d="M3.5 7.5l5 5M8.5 7.5l-5 5" stroke="#9cc45c" stroke-width="1.8"/></svg>
<svg style="position:absolute;left:9px;top:489px;" width="18" height="16" viewBox="0 0 18 16"><path d="M7.5 1.5h8.5l1 1v12h-9.5z" fill="#000"/><rect x="7" y="1" width="9" height="12" fill="#fff" stroke="#000" stroke-width="1"/><path d="M8 2.5h8M8 4.5h8M8 6.5h8M8 8.5h8" stroke="#1020f0" stroke-width="1"/><path d="M0.5 11L4 7.5V9.5H7V12.5H4V14.5z" fill="#ff0000" stroke="#000" stroke-width="0.6"/><path d="M9 11.5h1M11 11.5h1M13 11.5h1" stroke="#ff2020" stroke-width="1.2"/></svg>
<svg style="position:absolute;left:12px;top:516px;" width="11" height="10" viewBox="0 0 11 10"><path d="M5.5 0.8L10.2 9.2H0.8z" fill="#909090" stroke="#000" stroke-width="1" stroke-linejoin="round"/></svg>
<svg style="position:absolute;left:12px;top:540px;" width="11" height="11" viewBox="0 0 11 11"><path d="M0.8 1h9.4L5.5 9.5z" fill="#909090" stroke="#000" stroke-width="1" stroke-linejoin="round"/><path d="M1 1h9" stroke="#000" stroke-width="1.5"/></svg>
<svg style="position:absolute;left:9px;top:561px;" width="17" height="17" viewBox="0 0 17 17"><rect x="0" y="10" width="16" height="2.8" fill="#7a7a7a"/><path d="M5.5 12.8h4l-0.5 3h-3z" fill="#7a7a7a"/><g stroke="#7a7a7a" stroke-width="0.9" fill="none"><path d="M7.5 9.5V7M4.5 2L7.5 7L9.5 2.5M3 6l4.5 2.5 4.5-3M0.5 5.5h2.5M11 5.5l2.5-1.5M8.5 1v2"/></g><rect x="13.5" y="0.5" width="2.5" height="3" fill="#dedede"/></svg>
<div style="left:7px;top:750px;width:21px;height:21px;background:#f0f0f0;border-top:1px solid #a0a0a0;border-left:1px solid #a0a0a0;border-right:1px solid #fff;border-bottom:1px solid #fff;box-shadow:inset 1px 1px 0 #fff,inset -1px -1px 0 #a0a0a0"></div>
<div style="left:7px;top:774px;width:21px;height:21px;background:#f0f0f0;border-top:1px solid #a0a0a0;border-left:1px solid #a0a0a0;border-right:1px solid #fff;border-bottom:1px solid #fff;box-shadow:inset 1px 1px 0 #fff,inset -1px -1px 0 #a0a0a0"></div>
<svg style="position:absolute;left:9px;top:728px;" width="18" height="17" viewBox="0 0 18 17"><path d="M1.5 9.5v6h10v-4M1.5 9.5h4" fill="none" stroke="#222" stroke-width="1.3"/><path d="M6 7a4 4 0 1 0 6-4" fill="none" stroke="#9ccc3c" stroke-width="1.1" stroke-dasharray="2 1"/><path d="M15.5 3v5" stroke="#444" stroke-width="1.2"/></svg>
<svg style="position:absolute;left:9px;top:753px;" width="17" height="17" viewBox="0 0 17 17"><path d="M7 1h3v3l3 1-2 4h-5l-2-4 3-1z" fill="#7a7a7a"/><path d="M1 5h5M13 3a1.5 1.5 0 1 1 0 3" fill="none" stroke="#7a7a7a" stroke-width="1.2"/><path d="M2 15V9.5h10V15" fill="none" stroke="#7a7a7a" stroke-width="1.2"/><path d="M13 11l2.5 4h-2.5z" fill="#7a7a7a"/></svg>
<svg style="position:absolute;left:9px;top:777px;" width="17" height="16" viewBox="0 0 17 16"><path d="M1 3h9M1 5.5h9" stroke="#7a7a7a" stroke-width="1"/><path d="M1 7h11l2-4 1.5 1-2 5v2h-12z" fill="#7a7a7a"/><circle cx="3.5" cy="12.5" r="2" fill="#7a7a7a"/><circle cx="9" cy="12" r="2.5" fill="#7a7a7a"/><path d="M11 10l4.5 4.5" stroke="#7a7a7a" stroke-width="1.5"/><path d="M13 1.5a1.5 1.5 0 1 1 1 3" fill="none" stroke="#7a7a7a" stroke-width="1"/></svg>
<svg style="position:absolute;left:9px;top:801px;" width="17" height="18" viewBox="0 0 17 18"><g fill="none" stroke="#555" stroke-width="0.9"><path d="M1.5 10V1.5h3.5a2.3 2.3 0 0 1 0 4.6H1.5"/><path d="M5 13.5l2.8-7 2.8 7M6 11h3.5"/><path d="M10.5 17.5v-7.5l2.5 4.5 2.5-4.5v7.5"/></g></svg>
<svg style="position:absolute;left:470px;top:760px;" width="14" height="16" viewBox="0 0 14 16"><path d="M0.8 0.8h8l3.8 3.8v10.6h-11.6z" fill="#fff" stroke="#000" stroke-width="1.3"/><path d="M8.5 0.8v3.8h4" fill="none" stroke="#000" stroke-width="0.8"/></svg>
<svg style="position:absolute;left:471px;top:784px;" width="13" height="16" viewBox="0 0 13 16"><path d="M0.8 0.8h7l3.5 3.5v10h-10.5z" fill="#fff" stroke="#000" stroke-width="1.3"/><path d="M7.5 0.8v3.5h3.8" fill="none" stroke="#000" stroke-width="0.8"/><path d="M3.5 7.5l5 5M8.5 7.5l-5 5" stroke="#9cc45c" stroke-width="1.8"/></svg></body></html>
